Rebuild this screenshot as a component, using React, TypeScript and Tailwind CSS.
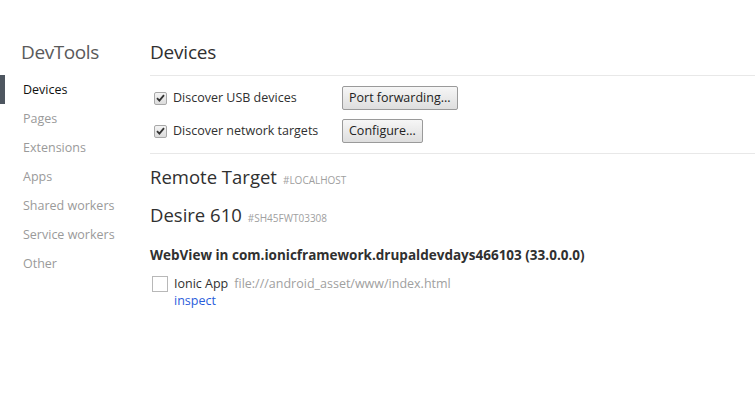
const navItems = ['Devices', 'Pages', 'Extensions', 'Apps', 'Shared workers', 'Service workers', 'Other']

function CheckedBox() {
  return (
    <span className="flex h-[13px] w-[13px] items-center justify-center rounded-[2px] border border-[#a8a8a8] bg-gradient-to-b from-[#f4f4f4] to-[#dcdcdc]">
      <svg width="9" height="8" viewBox="0 0 9 8">
        <path d="M1 4.2 L3.4 6.6 L8 1.2" fill="none" stroke="#333" strokeWidth="1.8" />
      </svg>
    </span>
  )
}

function Button({ children }: { children: React.ReactNode }) {
  return (
    <button className="h-[24px] rounded-[2px] border border-[#9a9a9a] bg-gradient-to-b from-[#f6f6f6] to-[#dedede] px-[6px] text-[12.5px] text-[#222]">
      {children}
    </button>
  )
}

export default function App() {
  return (
    <div
      className="flex h-[417px] w-[755px] bg-white text-[#303030]"
      style={{ fontFamily: '"Open Sans", "Noto Sans", sans-serif' }}
    >
      <aside className="w-[150px] shrink-0 pt-[38px]">
        <h1 className="pl-[21px] text-[19px] leading-[28px] tracking-[-0.4px] text-[#5a5a5a]">DevTools</h1>
        <nav className="mt-[9px] flex flex-col">
          {navItems.map((item, i) => (
            <div
              key={item}
              className={
                i === 0
                  ? 'h-[29px] border-l-[5px] border-[#4e5660] pl-[18px] text-[12.5px] leading-[29px] text-[#111]'
                  : 'h-[29px] pl-[23px] text-[12.5px] leading-[29px] text-[#9a9a9a]'
              }
            >
              {item}
            </div>
          ))}
        </nav>
      </aside>

      <main className="flex-1 pt-[38px]">
        <h2 className="text-[19px] leading-[28px] tracking-[-0.2px] text-[#303030]">Devices</h2>
        <div className="mt-[9px] border-t border-[#e8e8e8] pb-[10px] pt-[10px]">
          <div className="flex h-[24px] items-center">
            <div className="flex w-[192px] items-center gap-[6px] pl-[4px]">
              <CheckedBox />
              <span className="text-[12.5px]">Discover USB devices</span>
            </div>
            <Button>Port forwarding...</Button>
          </div>
          <div className="mt-[9px] flex h-[24px] items-center">
            <div className="flex w-[192px] items-center gap-[6px] pl-[4px]">
              <CheckedBox />
              <span className="text-[12.5px]">Discover network targets</span>
            </div>
            <Button>Configure...</Button>
          </div>
        </div>
        <div className="border-t border-[#e8e8e8] pt-[10px]">
          <div className="flex items-baseline gap-[6px]">
            <span className="text-[18.5px] leading-[26px]">Remote Target</span>
            <span className="text-[10px] uppercase text-[#a0a0a0]">#LOCALHOST</span>
          </div>
          <div className="mt-[12px] flex items-baseline gap-[6px]">
            <span className="text-[18.5px] leading-[26px]">Desire 610</span>
            <span className="text-[10px] text-[#a0a0a0]">#SH45FWT03308</span>
          </div>
          <div className="mt-[17px] text-[13.5px] font-bold leading-[20px] text-[#303030]">
            WebView in com.ionicframework.drupaldevdays466103 (33.0.0.0)
          </div>
          <div className="mt-[10px] flex items-start gap-[6px] pl-[2px]">
            <span className="mt-[1px] h-[16px] w-[16px] border border-[#b8b8b8] bg-white" />
            <div className="flex flex-col">
              <div className="flex items-baseline gap-[6px] text-[12.5px] leading-[17px]">
                <span className="text-[#303030]">Ionic App</span>
                <span className="text-[#a0a0a0]">file:///android_asset/www/index.html</span>
              </div>
              <span className="text-[12.5px] leading-[17px] text-[#2a5cdb]">inspect</span>
            </div>
          </div>
        </div>
      </main>
    </div>
  )
}
